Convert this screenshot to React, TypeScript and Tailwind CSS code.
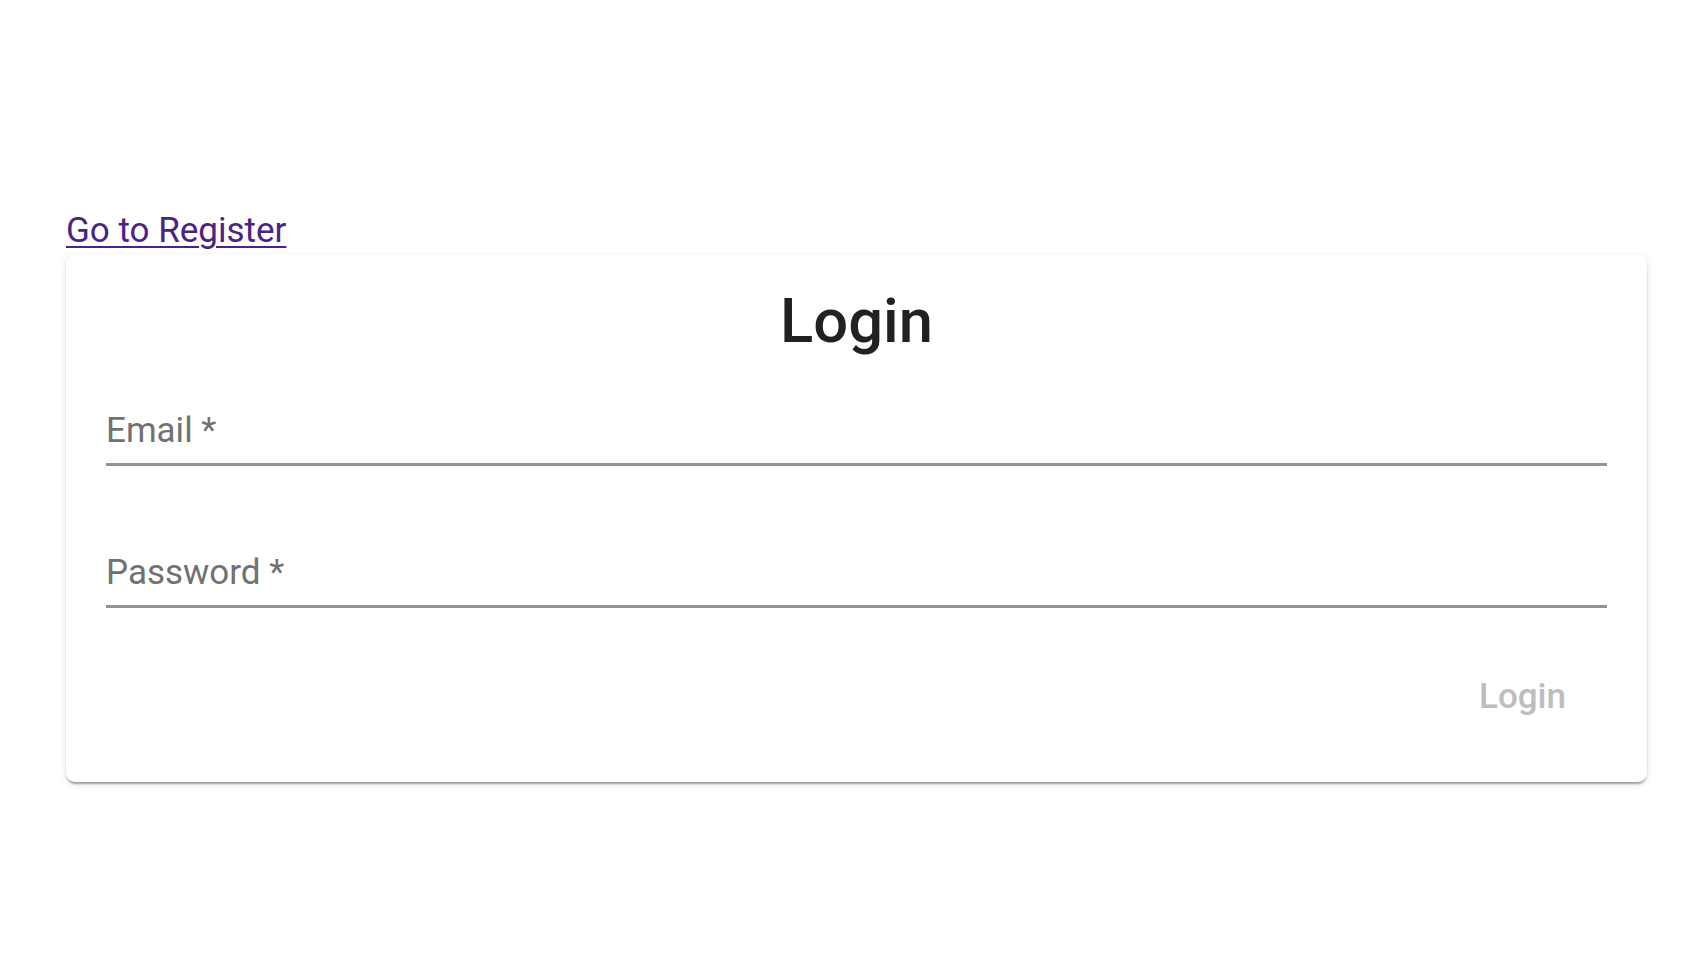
import React from "react";

export default function App() {
  return (
    <div
      className="min-h-screen bg-white pl-[66px] pr-[48px] pt-[205px]"
      style={{ fontFamily: "Roboto, 'Liberation Sans', sans-serif" }}
    >
      <div className="h-[50px] text-[35px] leading-[52px]">
        <a href="#" className="text-[#4a2384] underline decoration-[2px] underline-offset-[4px]">
          Go to Register
        </a>
      </div>
      <div className="rounded-[9px] bg-white px-[40px] pt-[28px] pb-[64px] shadow-[0_4px_2px_-2px_rgba(0,0,0,0.2),0_2px_2px_0_rgba(0,0,0,0.14),0_2px_7px_0_rgba(0,0,0,0.12)]">
        <h1 className="text-center text-[61.5px] font-medium leading-[77px] text-[#212121]">Login</h1>
        <div className="mt-[50px] border-b-[3px] border-[#949494] pb-[12px]">
          <div className="text-[35px] leading-[41px] text-[#717171]">Email *</div>
        </div>
        <div className="mt-[86px] border-b-[3px] border-[#949494] pb-[12px]">
          <div className="text-[35px] leading-[41px] text-[#717171]">Password *</div>
        </div>
        <div className="mt-[68px] flex justify-end pr-[41px]">
          <button className="text-[35px] font-medium leading-[42px] text-[#bdbdbd]" disabled>
            Login
          </button>
        </div>
      </div>
    </div>
  );
}
